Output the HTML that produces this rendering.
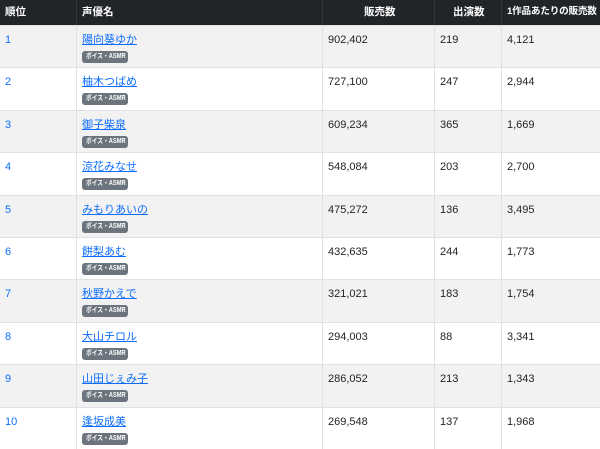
<!DOCTYPE html>
<html><head><meta charset="utf-8"><style>
*{margin:0;padding:0;box-sizing:border-box}
body{width:600px;height:449px;overflow:hidden;background:#fff;font-family:"Liberation Sans","Noto Sans CJK JP",sans-serif;font-size:11px;color:#212529;position:relative}
.hd{position:absolute;left:0;top:0;width:600px;height:25px;background:#212529;color:#fff;font-weight:bold;font-size:10.5px}
.hd span{position:absolute;top:5px;line-height:14px;white-space:nowrap}
.vl{position:absolute;top:0;width:1px;height:25px;background:#32383e}
.row{position:absolute;left:0;width:600px;height:42.4px;border-top:1px solid #dee2e6}
.row.s{background:#f2f2f2}
.row span{position:absolute;top:7px;line-height:14px;white-space:nowrap}
.c0{left:5px;color:#0d6efd}
.nm{left:82px;color:#0d6efd;text-decoration:underline}
.bd{position:absolute;left:82px;top:25px;width:46px;height:12px;background:#6c757d;border-radius:3px}
.bd b{position:absolute;left:4px;top:0;color:#fff;font-size:7px;line-height:12px;white-space:nowrap;transform-origin:0 50%;transform:scaleX(0.82)}
.c2{left:328px}.c3{left:440px}.c4{left:507px}
.v{position:absolute;top:25px;width:1px;height:424px;background:#dee2e6}
</style></head><body>
<div class="hd"><span style="left:5px">順位</span><span style="left:82px">声優名</span><span style="left:364px">販売数</span><span style="left:453px">出演数</span><span style="left:507px;font-size:9.6px;letter-spacing:-0.2px">1作品あたりの販売数</span>
<div class="vl" style="left:76px"></div><div class="vl" style="left:322px"></div><div class="vl" style="left:434px"></div><div class="vl" style="left:501px"></div></div>
<div class="row s" style="top:25px"><span class="c0">1</span><span class="nm">陽向葵ゆか</span><div class="bd"><b>ボイス・ASMR</b></div><span class="c2">902,402</span><span class="c3">219</span><span class="c4">4,121</span></div>
<div class="row" style="top:67.4px"><span class="c0">2</span><span class="nm">柚木つばめ</span><div class="bd"><b>ボイス・ASMR</b></div><span class="c2">727,100</span><span class="c3">247</span><span class="c4">2,944</span></div>
<div class="row s" style="top:109.8px"><span class="c0">3</span><span class="nm">御子柴泉</span><div class="bd"><b>ボイス・ASMR</b></div><span class="c2">609,234</span><span class="c3">365</span><span class="c4">1,669</span></div>
<div class="row" style="top:152.2px"><span class="c0">4</span><span class="nm">涼花みなせ</span><div class="bd"><b>ボイス・ASMR</b></div><span class="c2">548,084</span><span class="c3">203</span><span class="c4">2,700</span></div>
<div class="row s" style="top:194.6px"><span class="c0">5</span><span class="nm">みもりあいの</span><div class="bd"><b>ボイス・ASMR</b></div><span class="c2">475,272</span><span class="c3">136</span><span class="c4">3,495</span></div>
<div class="row" style="top:237px"><span class="c0">6</span><span class="nm">餅梨あむ</span><div class="bd"><b>ボイス・ASMR</b></div><span class="c2">432,635</span><span class="c3">244</span><span class="c4">1,773</span></div>
<div class="row s" style="top:279.4px"><span class="c0">7</span><span class="nm">秋野かえで</span><div class="bd"><b>ボイス・ASMR</b></div><span class="c2">321,021</span><span class="c3">183</span><span class="c4">1,754</span></div>
<div class="row" style="top:321.8px"><span class="c0">8</span><span class="nm">大山チロル</span><div class="bd"><b>ボイス・ASMR</b></div><span class="c2">294,003</span><span class="c3">88</span><span class="c4">3,341</span></div>
<div class="row s" style="top:364.2px"><span class="c0">9</span><span class="nm">山田じぇみ子</span><div class="bd"><b>ボイス・ASMR</b></div><span class="c2">286,052</span><span class="c3">213</span><span class="c4">1,343</span></div>
<div class="row" style="top:406.6px"><span class="c0">10</span><span class="nm">逢坂成美</span><div class="bd"><b>ボイス・ASMR</b></div><span class="c2">269,548</span><span class="c3">137</span><span class="c4">1,968</span></div>
<div class="v" style="left:76px"></div><div class="v" style="left:322px"></div><div class="v" style="left:434px"></div><div class="v" style="left:501px"></div>
</body></html>
